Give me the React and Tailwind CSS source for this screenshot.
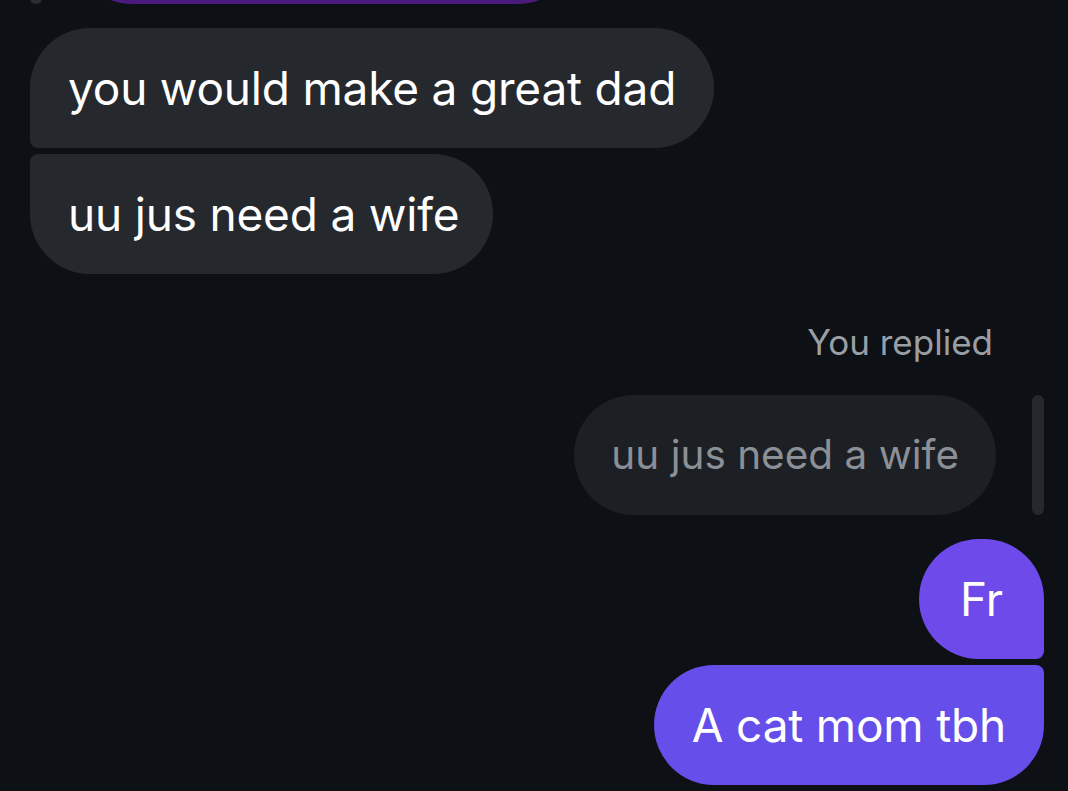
const Bubble = ({ children, className }) => (
  <div className={`flex h-[120px] items-center leading-none ${className}`}>{children}</div>
);

const App = () => {
  return (
    <div className="h-[791px] w-[1068px] overflow-hidden bg-[#0d1014] font-['Inter','Noto_Sans',sans-serif]">
      <div className="flex flex-col pl-[30px] pr-[24px]">
        {/* tail of the previous replied message */}
        <div className="-mt-[116px] flex items-end gap-[30px]">
          <div className="h-[120px] w-[12px] rounded-full bg-[#2a2d32]" />
          <div className="h-[120px] w-[506px] rounded-[60px] bg-[#4a1b7c]" />
        </div>

        <div className="mt-[24px] flex flex-col items-start gap-[6px]">
          <Bubble className="rounded-tl-[60px] rounded-tr-[60px] rounded-br-[60px] rounded-bl-[8px] bg-[#25282d] px-[38px] text-[46px] tracking-[-0.2px] text-white">
            you would make a great dad
          </Bubble>
          <Bubble className="rounded-tl-[8px] rounded-tr-[60px] rounded-br-[60px] rounded-bl-[60px] bg-[#25282d] pl-[38px] pr-[34px] text-[46px] tracking-[-0.2px] text-white">
            uu jus need a wife
          </Bubble>
        </div>

        <div className="mt-[48px] flex justify-end">
          <div className="flex flex-col items-end">
            <span className="pr-[3px] text-[35px] leading-[40px] text-[#9a9ea5]">You replied</span>
            <Bubble className="mt-[33px] rounded-[60px] bg-[#1c1f24] px-[37px] text-[40.5px] text-[#8b8f96]">
              uu jus need a wife
            </Bubble>
          </div>
          <div className="ml-[36px] mt-[73px] h-[120px] w-[12px] rounded-full bg-[#25282d]" />
        </div>

        <div className="mt-[24px] flex flex-col items-end gap-[6px]">
          <Bubble className="rounded-tl-[60px] rounded-tr-[60px] rounded-br-[8px] rounded-bl-[60px] bg-[#6d4ae9] px-[41px] text-[46px] text-white">
            Fr
          </Bubble>
          <Bubble className="rounded-tl-[60px] rounded-tr-[8px] rounded-br-[60px] rounded-bl-[60px] bg-[#654eea] px-[38px] text-[46px] tracking-[-0.2px] text-white">
            A cat mom tbh
          </Bubble>
        </div>
      </div>
    </div>
  );
};

export default App;
